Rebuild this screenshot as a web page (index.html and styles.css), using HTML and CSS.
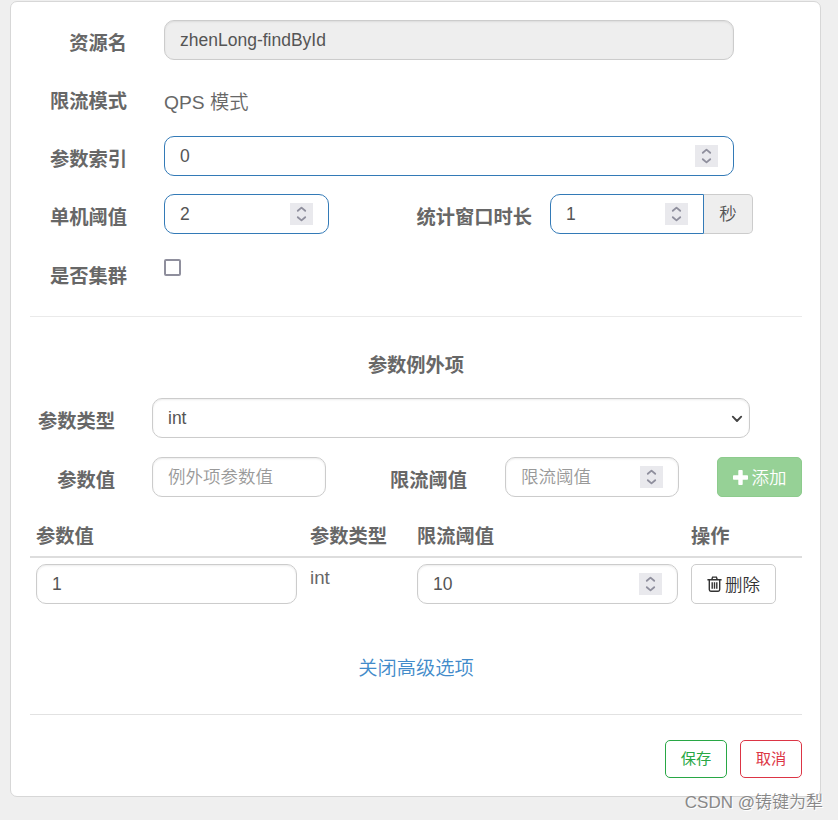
FILE: index.html
```html
<!DOCTYPE html>
<html lang="zh-CN">
<head>
<meta charset="utf-8">
<title>热点规则</title>
<link rel="stylesheet" href="styles.css">
</head>
<body>
<svg width="0" height="0" class="defs">
  <symbol id="spin" viewBox="0 0 23 22"><path d="M7.8 7.8 11.5 4.6 15.2 7.8M7.8 14.2 11.5 17.4 15.2 14.2" fill="none" stroke="#8f8f9d" stroke-width="1.8" stroke-linecap="round" stroke-linejoin="round"/></symbol>
</svg>
<main class="card">
  <div class="row">
    <label class="label main-label">资源名</label>
    <div class="field wide disabled">zhenLong-findById</div>
  </div>
  <div class="row">
    <label class="label main-label">限流模式</label>
    <div class="static">QPS 模式</div>
  </div>
  <div class="row">
    <label class="label main-label">参数索引</label>
    <div class="field wide active">0<svg class="spin"><use href="#spin"/></svg></div>
  </div>
  <div class="row">
    <label class="label main-label">单机阈值</label>
    <div class="field single active">2<svg class="spin"><use href="#spin"/></svg></div>
    <label class="label window-label">统计窗口时长</label>
    <div class="field duration active">1<svg class="spin"><use href="#spin"/></svg></div>
    <div class="addon">秒</div>
  </div>
  <div class="row">
    <label class="label main-label low">是否集群</label>
    <div class="checkbox"></div>
  </div>
  <div class="rule"></div>
  <h4 class="title">参数例外项</h4>
  <div class="row type-row">
    <label class="label sub-label">参数类型</label>
    <div class="field select">int<svg class="chevron" viewBox="0 0 12 8"><path d="M1.8 1.7 6 6 10.2 1.7" fill="none" stroke="#444" stroke-width="1.9" stroke-linecap="round" stroke-linejoin="round"/></svg></div>
  </div>
  <div class="row value-row">
    <label class="label sub-label">参数值</label>
    <div class="field item placeholder">例外项参数值</div>
    <label class="label limit-label">限流阈值</label>
    <div class="field item placeholder">限流阈值<svg class="spin"><use href="#spin"/></svg></div>
    <button class="button add"><svg width="15" height="15" viewBox="0 0 15 15"><path d="M5.3 0.8Q5.3 0 6.1 0H8.9Q9.7 0 9.7.8V5.3H14.2Q15 5.3 15 6.1V8.9Q15 9.7 14.2 9.7H9.7V14.2Q9.7 15 8.9 15H6.1Q5.3 15 5.3 14.2V9.7H.8Q0 9.7 0 8.9V6.1Q0 5.3.8 5.3H5.3Z" fill="#fff"/></svg><span>添加</span></button>
  </div>
  <div class="grid head">
    <span>参数值</span><span>参数类型</span><span>限流阈值</span><span>操作</span>
  </div>
  <div class="grid body">
    <div class="field">1</div>
    <div class="kind">int</div>
    <div class="field">10<svg class="spin"><use href="#spin"/></svg></div>
    <button class="button delete"><svg width="15" height="16" viewBox="0 0 15 16"><path d="M.4 3.8H14.6M4.8 3.5 5.6 1.1H9.4L10.2 3.5M2.3 4V13.5Q2.3 15.2 3.8 15.2H11.2Q12.7 15.2 12.7 13.5V4M5.2 6.2V12.7M7.5 6.2V12.7M9.8 6.2V12.7" fill="none" stroke="#333" stroke-width="1.4"/></svg><span>删除</span></button>
  </div>
  <a class="toggle">关闭高级选项</a>
  <div class="rule bottom-rule"></div>
  <div class="footer">
    <button class="button save">保存</button>
    <button class="button cancel">取消</button>
  </div>
</main>
<div class="watermark">CSDN @铸键为犁</div>
</body>
</html>
```
FILE: styles.css
```css
* { box-sizing: border-box; }
body {
  margin: 0;
  padding: 1px 0 0 10px;
  height: 820px;
  overflow: hidden;
  background: #efefef;
  color: #676767;
  font: 350 19.25px/28px "Liberation Sans", "Noto Sans CJK SC", sans-serif;
}
.defs { position: absolute; }
.card {
  width: 811px;
  height: 796px;
  padding: 18px 18px 0 19px;
  background: #fff;
  border: 1px solid #d7d7d7;
  border-radius: 7px;
}
.row { display: flex; height: 40px; margin-bottom: 18px; }
.label {
  flex: none;
  padding-top: 10px;
  text-align: right;
  font-weight: 700;
}
.main-label { width: 97px; margin-right: 37px; }
.low { padding-top: 11px; }
.window-label { width: 203px; margin-right: 18px; }
.sub-label { width: 85px; margin-right: 37px; }
.limit-label { width: 141px; margin-right: 38px; }
.static { padding-top: 11px; }
.field {
  position: relative;
  display: flex;
  align-items: center;
  height: 40px;
  padding: 0 15px 1px;
  border: 1px solid #ccc;
  border-radius: 10px;
  background: #fff;
  box-shadow: inset 0 1px 2px rgba(0, 0, 0, .08);
  color: #555;
  font-size: 17.5px;
  line-height: 26px;
}
.wide { width: 570px; }
.single { width: 165px; }
.duration { width: 154px; border-radius: 10px 0 0 10px; }
.select { width: 598px; }
.item { width: 174px; }
.disabled { background: #eee; }
.active { border-color: #337ab7; box-shadow: none; }
.placeholder { color: #999; }
.spin {
  width: 23px;
  height: 22px;
  margin-left: auto;
  background: #e9e9ed;
}
.chevron { width: 12px; height: 8px; margin: 2px -9px 0 auto; }
.addon {
  width: 49px;
  height: 40px;
  border: 1px solid #ccc;
  border-left: 0;
  border-radius: 0 5px 5px 0;
  background: #eee;
  color: #555;
  font-size: 17.5px;
  line-height: 39px;
  text-align: center;
}
.checkbox {
  width: 17px;
  height: 17px;
  margin-top: 7px;
  border: 2px solid #8f8f9d;
  border-radius: 2px;
}
.rule { height: 1px; margin-top: 24px; background: #eaeaea; }
.title {
  margin: 35px 0 18px;
  font-size: 19.25px;
  line-height: 28px;
  text-align: center;
}
.type-row { margin-bottom: 19px; }
.button {
  display: flex;
  align-items: center;
  justify-content: center;
  padding: 0;
  border: 1px solid #ccc;
  border-radius: 5px;
  background: #fff;
  color: #333;
  font: 350 17.5px/26px "Liberation Sans", "Noto Sans CJK SC", sans-serif;
}
.add {
  width: 85px;
  height: 40px;
  margin-left: auto;
  gap: 4px;
  border-color: #8dcb8d;
  background: #96d196;
  color: #fff;
}
.grid {
  display: grid;
  grid-template-columns: 261px 94px 261px 85px;
  column-gap: 13px;
  padding-left: 6px;
}
.head {
  height: 42px;
  padding-top: 7px;
  border-bottom: 2px solid #ddd;
  font-weight: 700;
}
.value-row { margin-bottom: 19px; }
.body { padding-top: 6px; }
.kind { font-size: 18.7px; }
.delete { height: 40px; gap: 3px; }
.delete span, .add span { padding-top: 1px; }
.toggle {
  display: block;
  margin: 51px 0 31px;
  color: #428bca;
  text-align: center;
}
.bottom-rule { margin-top: 0; background: #e2e2e2; }
.footer { display: flex; justify-content: flex-end; gap: 13px; margin-top: 25px; }
.footer .button { width: 62px; height: 38px; font-size: 15.3px; font-weight: 400; }
.footer .save { border-color: #28a745; color: #28a745; }
.footer .cancel { border-color: #dc3545; color: #dc3545; }
.watermark {
  position: absolute;
  right: 15px;
  top: 790px;
  color: #888;
  font-size: 17px;
  line-height: 26px;
  white-space: nowrap;
  text-shadow: 1px 1px 0 #fff;
}
```
